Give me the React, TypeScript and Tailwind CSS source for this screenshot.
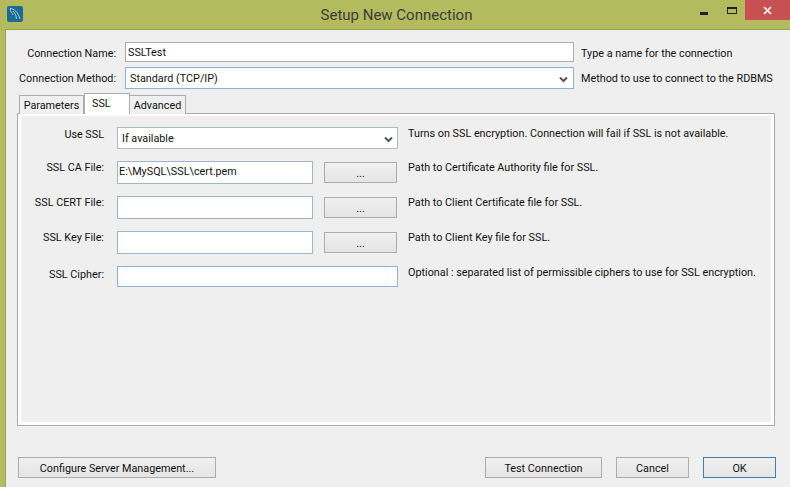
import React from 'react';

const font = { fontFamily: 'Roboto, "Noto Sans", sans-serif' };

const Label = ({ text, className }: { text: string; className: string }) => (
  <div className={`shrink-0 text-right text-[10.8px] leading-4 text-[#111] whitespace-nowrap ${className}`}>{text}</div>
);

const Help = ({ text, className = '' }: { text: string; className?: string }) => (
  <div className={`text-[10.8px] leading-4 text-[#111] whitespace-nowrap ${className}`}>{text}</div>
);

const Chevron = () => (
  <svg width="9" height="7" viewBox="0 0 9 7" className="shrink-0">
    <path d="M1 1.5 L4.5 5 L8 1.5" fill="none" stroke="#555" strokeWidth="2" />
  </svg>
);

const Button = ({ label, className = '', primary = false }: { label: string; className?: string; primary?: boolean }) => (
  <button
    className={`flex h-[21px] shrink-0 items-center justify-center border bg-gradient-to-b from-[#f0f0f0] to-[#e5e5e5] pt-[3px] text-[10.8px] text-[#111] ${
      primary ? 'border-[#3c7fb1]' : 'border-[#acacac]'
    } ${className}`}
  >
    {label}
  </button>
);

const Row = ({ label, help, value }: { label: string; help: string; value?: string }) => (
  <div className="mt-[12px] flex">
    <Label text={label} className="-mt-[1px] w-[83px]" />
    <div className="ml-[13px] flex h-[23px] w-[196px] shrink-0 items-center border border-[#9db5cf] bg-white pl-[1px] text-[10.8px] text-[#111]">
      {value}
    </div>
    <Button label="..." className="ml-[11px] mt-[1px] w-[73px]" />
    <Help text={help} className="-mt-[1px] ml-[11px]" />
  </div>
);

export default function App() {
  return (
    <div className="flex h-[487px] w-[790px] flex-col overflow-hidden bg-[#b3bb5e] pl-[5px]" style={font}>
      {/* title bar */}
      <div className="-ml-[5px] flex h-[29px] shrink-0 items-start">
        <div className="ml-[7px] mt-[6px] flex h-[16px] w-[16px] items-center justify-center rounded-[2px] bg-[#1f6a94]">
          <svg width="16" height="16" viewBox="0 0 16 16">
            <path d="M3 2.5 C7 2.5 11 6 13 13 M3 2.5 C3.5 6 5 6.5 6 9 M6 5 C8 7 9 9 9.5 13" fill="none" stroke="#a9c9da" strokeWidth="1" />
          </svg>
        </div>
        <div className="flex-1 pl-[70px] pt-[5px] text-center text-[15px] leading-5 text-[#3b3b3b]">Setup New Connection</div>
        <div className="mt-[12px] h-[2.5px] w-[8px] bg-[#222]" />
        <div className="ml-[19px] mt-[7px] h-[7px] w-[10px] border border-t-2 border-[#222]" />
        <div className="ml-[8px] flex h-[20px] w-[45px] items-center justify-center bg-[#c75050]">
          <svg width="9" height="9" viewBox="0 0 9 9">
            <path d="M1 1 L8 8 M8 1 L1 8" stroke="#fff" strokeWidth="1.7" />
          </svg>
        </div>
      </div>

      {/* client area */}
      <div className="flex flex-1 flex-col border-t border-l border-[#9ba24f] bg-[#efefef]">
        <div className="mt-[12px] flex h-[20px] items-center">
          <Label text="Connection Name:" className="mt-[3px] w-[110px]" />
          <div className="ml-[9px] flex h-[20px] w-[449px] items-center border border-[#acacac] bg-white pl-[2px] pt-[2px] text-[10.8px] text-[#111]">SSLTest</div>
          <Help text="Type a name for the connection" className="ml-[7px] mt-[3px]" />
        </div>
        <div className="mt-[5px] flex h-[22px] items-center">
          <Label text="Connection Method:" className="mt-[2px] w-[110px]" />
          <div className="ml-[9px] flex h-[22px] w-[449px] items-center justify-between border border-[#8fb0d0] bg-white pl-[4px] pr-[5px] pt-[2px] text-[10.8px] text-[#111]">
            Standard (TCP/IP)
            <Chevron />
          </div>
          <Help text="Method to use to connect to the RDBMS" className="ml-[7px] mt-[2px]" />
        </div>

        {/* tabs */}
        <div className="relative z-10 ml-[13px] mt-[4px] flex h-[21px] items-end text-[10.8px] text-[#111]">
          <div className="flex h-[19px] w-[65px] items-center justify-center border border-b-0 border-[#acacac] bg-[#f0f0f0] pt-[2px]">Parameters</div>
          <div className="flex h-[21px] w-[46px] items-center border border-b-0 border-[#acacac] bg-white pl-[7px]">SSL</div>
          <div className="flex h-[19px] w-[56px] items-center justify-center border border-b-0 border-l-0 border-[#acacac] bg-[#f0f0f0] pt-[2px]">Advanced</div>
        </div>
        <div className="ml-[11px] -mt-[1px] h-[313px] w-[758px] border border-[#acacac] bg-white px-[3px] pt-[2px] pb-[3px]">
          <div className="flex h-full flex-col bg-[#efefef]">
            <div className="mt-[11px] flex">
              <Label text="Use SSL" className="w-[83px]" />
              <div className="ml-[13px] flex h-[22px] w-[281px] shrink-0 items-center justify-between border border-[#abb8c7] bg-white pl-[4px] pr-[4px] pt-[2px] text-[10.8px] text-[#111]">
                If available
                <Chevron />
              </div>
              <Help text="Turns on SSL encryption. Connection will fail if SSL is not available." className="-mt-[1px] ml-[10px]" />
            </div>
            <Row label="SSL CA File:" value="E:\MySQL\SSL\cert.pem" help="Path to Certificate Authority file for SSL." />
            <Row label="SSL CERT File:" help="Path to Client Certificate file for SSL." />
            <Row label="SSL Key File:" help="Path to Client Key file for SSL." />
            <div className="mt-[12px] flex">
              <Label text="SSL Cipher:" className="mt-[1px] w-[83px]" />
              <div className="ml-[13px] h-[21px] w-[281px] shrink-0 border border-[#8fb0d0] bg-white" />
              <Help text="Optional : separated list of permissible ciphers to use for SSL encryption." className="-mt-[1px] ml-[10px]" />
            </div>
          </div>
        </div>

        {/* footer buttons */}
        <div className="ml-[12px] mt-[31px] flex w-[758px]">
          <Button label="Configure Server Management..." className="w-[198px]" />
          <Button label="Test Connection" className="ml-auto w-[117px]" />
          <Button label="Cancel" className="ml-[14px] w-[73px]" />
          <Button label="OK" primary className="ml-[14px] w-[73px]" />
        </div>
      </div>
    </div>
  );
}
